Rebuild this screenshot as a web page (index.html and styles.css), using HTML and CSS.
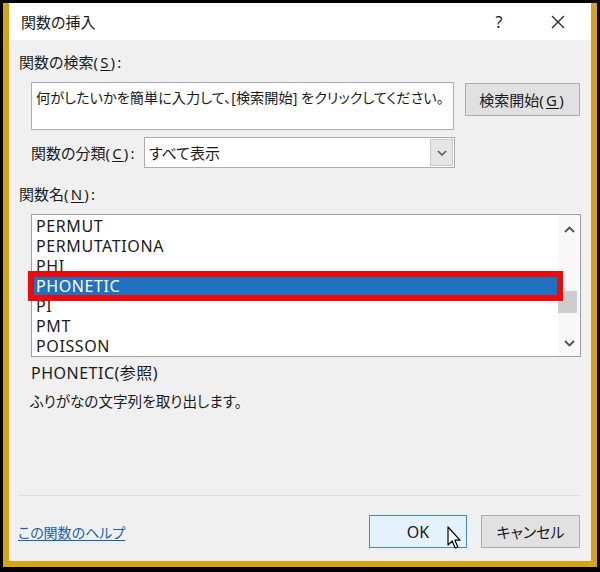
FILE: index.html
```html
<!DOCTYPE html>
<html lang="ja">
<head>
<meta charset="utf-8">
<title>関数の挿入</title>
<link rel="stylesheet" href="styles.css">
</head>
<body>
<div class="screen">
  <div class="dialog">
    <div class="titlebar">
      <span class="title">関数の挿入</span>
      <span class="qmark">?</span>
      <svg class="close" width="14" height="14" viewBox="0 0 14 14"><path d="M1 1L13 13M13 1L1 13" stroke="#2b2b2b" stroke-width="1.4" fill="none"/></svg>
    </div>
    <div class="body">
      <div class="label">関数の検索<span class="key">(<u>S</u>):</span></div>
      <div class="search-row">
        <div class="textarea">何がしたいかを簡単に入力して、[検索開始] をクリックしてください。</div>
        <div class="btn search-btn">検索開始<span class="key">(<u>G</u>)</span></div>
      </div>
      <div class="cat-row">
        <span class="cat-label">関数の分類<span class="key">(<u>C</u>):</span></span>
        <div class="select">
          <span class="select-value">すべて表示</span>
          <span class="select-arrow"><svg width="10" height="6" viewBox="0 0 10 6"><path d="M1 1L5 5L9 1" stroke="#555" stroke-width="1.5" fill="none"/></svg></span>
        </div>
      </div>
      <div class="label names-label">関数名<span class="key">(<u>N</u>):</span></div>
      <div class="listbox">
        <ul class="items">
          <li>PERMUT</li>
          <li>PERMUTATIONA</li>
          <li>PHI</li>
          <li class="selected">PHONETIC</li>
          <li>PI</li>
          <li>PMT</li>
          <li>POISSON</li>
        </ul>
        <div class="scrollbar">
          <svg class="arrow-up" width="11" height="7" viewBox="0 0 11 7"><path d="M1 6L5.5 1.5L10 6" stroke="#505050" stroke-width="1.8" fill="none"/></svg>
          <div class="thumb"></div>
          <svg class="arrow-down" width="11" height="7" viewBox="0 0 11 7"><path d="M1 1L5.5 5.5L10 1" stroke="#505050" stroke-width="1.8" fill="none"/></svg>
        </div>
        <div class="mark"></div>
      </div>
      <div class="syntax">PHONETIC(参照)</div>
      <div class="desc">ふりがなの文字列を取り出します。</div>
      <div class="sep"></div>
      <div class="footer">
        <a class="helplink" href="#">この関数のヘルプ</a>
        <div class="buttons">
          <div class="btn ok">OK</div>
          <div class="btn cancel">キャンセル</div>
        </div>
        <svg class="cursor" width="14" height="24" viewBox="0 0 14 24"><path d="M1 1L1 19L5.2 15L8.2 22L10.8 21L7.9 14.2L13 14.2Z" fill="#fff" stroke="#000" stroke-width="1.2" stroke-linejoin="round"/></svg>
      </div>
    </div>
  </div>
</div>
</body>
</html>
```

FILE: styles.css
```css
* { box-sizing: border-box; }
html, body { margin: 0; padding: 0; background: #000; }
body {
  font-family: "Noto Sans", "Noto Sans CJK JP", sans-serif;
  font-feature-settings: "palt";
  color: #1a1a1a;
}
.screen {
  width: 600px;
  height: 572px;
  padding: 3px 3px 5px 3px;
  background: #000;
}
.dialog {
  width: 594px;
  height: 564px;
  background: #d6a31a;
  padding: 0 6px 6px 6px;
  display: flex;
  flex-direction: column;
}
.titlebar {
  height: 37px;
  background: #fff;
  display: flex;
  align-items: center;
  padding-left: 12px;
  flex-shrink: 0;
}
.title { font-size: 15px; flex: 1; line-height: 20px; }
.qmark { font-size: 16px; font-family: "Noto Sans", sans-serif; width: 14px; text-align: center; margin-right: 45px; }
.close { margin-right: 26px; }
.body {
  flex: 1;
  background: #f0f0f0;
  padding: 12px 11px 13px 10px;
  display: flex;
  flex-direction: column;
  position: relative;
}
.label { font-size: 15px; line-height: 20px; }
.key { letter-spacing: 2.2px; }
u { text-decoration: underline; text-underline-offset: 2px; text-decoration-thickness: 1px; }
.search-row {
  display: flex;
  gap: 11px;
  margin-top: 10px;
  padding-left: 12px;
  align-items: flex-start;
}
.textarea {
  width: 424px;
  height: 48px;
  background: #fff;
  border: 1px solid #abadb3;
  padding: 5px 0 0 4px;
  font-size: 14.2px;
  line-height: 20px;
  white-space: nowrap;
  overflow: hidden;
}
.btn {
  background: #e1e1e1;
  border: 1px solid #adadad;
  display: flex;
  align-items: center;
  justify-content: center;
  font-size: 15px;
}
.search-btn { width: 115px; height: 33px; margin-top: 1px; }
.cat-row {
  display: flex;
  align-items: center;
  margin-top: 7px;
  padding-left: 12px;
}
.cat-label { font-size: 15px; width: 113px; }
.select {
  width: 311px;
  height: 31px;
  background: #fff;
  border: 1px solid #abadb3;
  display: flex;
  align-items: center;
}
.select-value { flex: 1; font-size: 15px; padding-left: 4px; }
.select-arrow {
  width: 23px;
  height: 27px;
  margin-right: 1px;
  background: #e6e6e6;
  border: 1px solid #c8c8c8;
  display: flex;
  align-items: center;
  justify-content: center;
}
.names-label { margin-top: 16px; }
.listbox {
  margin-top: 10px;
  margin-left: 12px;
  width: 550px;
  height: 143px;
  background: #fff;
  border: 1px solid #a0a0a0;
  display: flex;
  position: relative;
}
.items {
  list-style: none;
  margin: 0;
  padding: 1px 0 0 0;
  flex: 1;
}
.items li {
  height: 20px;
  line-height: 20px;
  font-size: 16px;
  letter-spacing: 0.6px;
  padding-left: 4px;
}
.items li.selected { background: #1f72bf; color: #fff; }
.scrollbar {
  width: 22px;
  position: relative;
  background: #f8f8f8;
  display: flex;
  flex-direction: column;
  align-items: flex-start;
}
.arrow-up { margin: 11px 0 0 6px; }
.thumb { width: 19px; height: 22px; background: #cdcdcd; margin-top: 58px; }
.arrow-down { margin: 27px 0 0 6px; }
.mark {
  position: absolute;
  left: -4px;
  top: 56px;
  width: 535px;
  height: 30px;
  border: 6px solid #ee0a0a;
}
.syntax { font-size: 16px; line-height: 20px; margin-top: 6px; padding-left: 12px; letter-spacing: 0.5px; }
.desc { font-size: 14.6px; line-height: 20px; margin-top: 8px; padding-left: 11px; }
.sep { margin-top: auto; height: 1px; background: #dcdcdc; margin-left: -1px; }
.footer {
  margin-top: 19px;
  display: flex;
  align-items: center;
  position: relative;
}
.helplink {
  font-size: 14px;
  color: #1a5fb4;
  text-decoration: underline;
  text-underline-offset: 2px;
  margin-left: -1px;
  flex: 1;
}
.buttons { display: flex; gap: 14px; }
.ok { width: 98px; height: 33px; background: #e5f1fb; border-color: #3d8bd8; font-size: 16px; }
.cancel { width: 99px; height: 33px; }
.cursor { position: absolute; left: 428px; top: 11px; }
```
